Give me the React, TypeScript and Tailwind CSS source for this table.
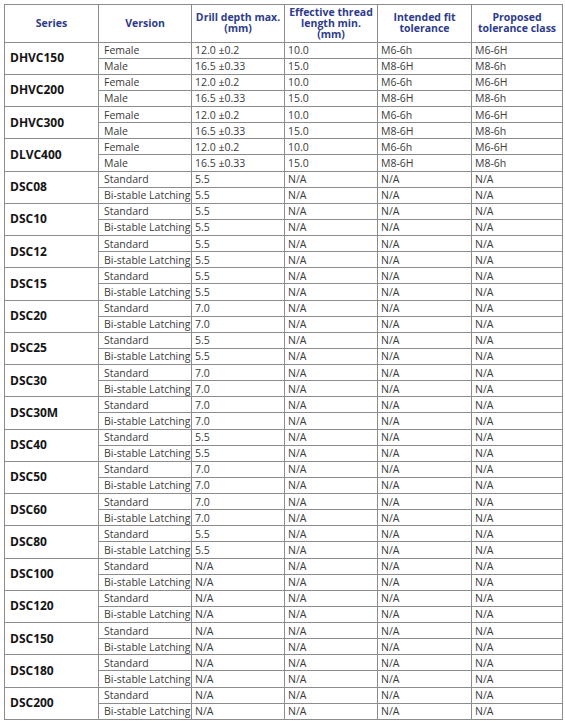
import React from "react";

type Group = { series: string; rows: string[][] };

const dh = (s: string): Group => ({
  series: s,
  rows: [
    ["Female", "12.0 ±0.2", "10.0", "M6-6h", "M6-6H"],
    ["Male", "16.5 ±0.33", "15.0", "M8-6H", "M8-6h"],
  ],
});

const dsc = (s: string, a: string, b: string): Group => ({
  series: s,
  rows: [
    ["Standard", a, "N/A", "N/A", "N/A"],
    ["Bi-stable Latching", b, "N/A", "N/A", "N/A"],
  ],
});

const groups: Group[] = [
  dh("DHVC150"),
  dh("DHVC200"),
  dh("DHVC300"),
  dh("DLVC400"),
  dsc("DSC08", "5.5", "5.5"),
  dsc("DSC10", "5.5", "5.5"),
  dsc("DSC12", "5.5", "5.5"),
  dsc("DSC15", "5.5", "5.5"),
  dsc("DSC20", "7.0", "7.0"),
  dsc("DSC25", "5.5", "5.5"),
  dsc("DSC30", "7.0", "7.0"),
  dsc("DSC30M", "7.0", "7.0"),
  dsc("DSC40", "5.5", "5.5"),
  dsc("DSC50", "7.0", "7.0"),
  dsc("DSC60", "7.0", "7.0"),
  dsc("DSC80", "5.5", "5.5"),
  dsc("DSC100", "N/A", "N/A"),
  dsc("DSC120", "N/A", "N/A"),
  dsc("DSC150", "N/A", "N/A"),
  dsc("DSC180", "N/A", "N/A"),
  dsc("DSC200", "N/A", "N/A"),
];

const headers: string[][] = [
  ["Series"],
  ["Version"],
  ["Drill depth max.", "(mm)"],
  ["Effective thread", "length min.", "(mm)"],
  ["Intended fit", "tolerance"],
  ["Proposed", "tolerance class"],
];

export default function App() {
  return (
    <div
      className="bg-white w-[565px] h-[721px] pt-[4px] pl-[4px]"
      style={{ fontFamily: '"Open Sans", "Noto Sans", sans-serif' }}
    >
      <table className="table-fixed border-collapse w-[558px] border border-[#8c8c8c]">
        <colgroup>
          <col className="w-[94px]" />
          <col className="w-[93px]" />
          <col className="w-[93px]" />
          <col className="w-[93px]" />
          <col className="w-[94px]" />
          <col className="w-[91px]" />
        </colgroup>
        <thead>
          <tr className="h-[37.5px]">
            {headers.map((h) => (
              <th
                key={h[0]}
                className="border border-[#8c8c8c] px-[2px] py-0 text-[10.5px] leading-[11px] font-bold text-[#2e3b8a] text-center align-middle whitespace-nowrap"
              >
                {h.map((line, k) => (
                  <div key={k}>{line}</div>
                ))}
              </th>
            ))}
          </tr>
        </thead>
        <tbody>
          {groups.map((g) =>
            g.rows.map((r, i) => (
              <tr key={g.series + i} className="h-[16.13px]">
                {i === 0 && (
                  <td
                    rowSpan={2}
                    className="border border-[#8c8c8c] pl-[5px] text-[12px] font-bold text-[#141414] align-middle leading-none"
                  >
                    {g.series}
                  </td>
                )}
                {r.map((c, j) => (
                  <td
                    key={j}
                    className={`border border-[#8c8c8c] ${j === 0 ? "pl-[5px]" : "pl-[3px]"} p-0 text-[10.5px] leading-[12px] text-[#3a3a3a] whitespace-nowrap align-middle`}
                  >
                    {c}
                  </td>
                ))}
              </tr>
            ))
          )}
        </tbody>
      </table>
    </div>
  );
}
